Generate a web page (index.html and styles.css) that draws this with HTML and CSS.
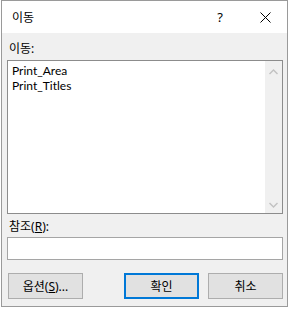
FILE: index.html
```html
<!DOCTYPE html>
<html lang="ko">
<head>
  <meta charset="UTF-8" />
  <title>이동</title>
  <link rel="stylesheet" href="styles.css">
</head>
<body>
  <div class="dialog">
    <!-- Title bar -->
    <div class="titlebar">
      <span class="title">이동</span>
      <span class="tb-btn help">?</span>
      <span class="tb-btn close">
        <svg width="11" height="11" viewBox="0 0 11 11"><path d="M0.5 0.5 L10.5 10.5 M10.5 0.5 L0.5 10.5" stroke="#000" stroke-width="1" fill="none"/></svg>
      </span>
    </div>

    <div class="body">
      <div class="label first">이동:</div>
      <div class="listbox">
        <ul class="items">
          <li>Print_Area</li>
          <li>Print_Titles</li>
        </ul>
        <div class="scrollbar">
          <svg width="9" height="6" viewBox="0 0 9 6"><path d="M0.5 5 L4.5 1 L8.5 5" stroke="#c2c2c2" stroke-width="1.4" fill="none"/></svg>
          <svg width="9" height="6" viewBox="0 0 9 6"><path d="M0.5 1 L4.5 5 L8.5 1" stroke="#c2c2c2" stroke-width="1.4" fill="none"/></svg>
        </div>
      </div>

      <div class="label">참조(<u>R</u>):</div>
      <div class="input"></div>

      <div class="buttons">
        <button class="btn">옵션(<u>S</u>)...</button>
        <span class="spacer"></span>
        <button class="btn default">확인</button>
        <button class="btn">취소</button>
      </div>
    </div>
  </div>
</body>
</html>
```

FILE: styles.css
```css
* {
  box-sizing: border-box;
  margin: 0;
  padding: 0;
}

body {
  background: #ffffff;
  font-family: "Noto Sans", "Noto Sans CJK KR", sans-serif;
  font-size: 12px;
  color: #000;
}

.dialog {
  margin-left: 1px;
  width: 287px;
  height: 307px;
  border: 1px solid #9a9a9a;
  background: #f0f0f0;
  display: flex;
  flex-direction: column;
}

.titlebar {
  height: 32px;
  background: #fff;
  display: flex;
  align-items: center;
  padding-left: 10px;
}

.title {
  flex: 1;
  font-size: 12px;
}

.tb-btn {
  height: 32px;
  display: flex;
  align-items: center;
  justify-content: center;
}

.help {
  width: 46px;
  font-size: 13px;
}

.close {
  width: 44px;
}

.body {
  flex: 1;
  padding: 0 4px 0 5px;
}

.label {
  line-height: 16px;
  padding-left: 2px;
  margin-top: 5px;
}

.label.first {
  margin-top: 8px;
  margin-bottom: 3px;
}

.listbox {
  height: 154px;
  border: 1px solid #8c8c8c;
  background: #fff;
  display: flex;
}

.items {
  flex: 1;
  list-style: none;
  padding: 2px 0 0 4px;
  font-family: Lato, "Noto Sans", sans-serif;
  font-size: 12px;
}

.items li {
  line-height: 15px;
}

.scrollbar {
  width: 17px;
  background: #f0f0f0;
  display: flex;
  flex-direction: column;
  justify-content: space-between;
  align-items: center;
  padding: 8px 0 5px;
}

.input {
  margin-top: 2px;
  height: 23px;
  border: 1px solid #a5a5a5;
  background: #fff;
}

.buttons {
  display: flex;
  margin-top: 13px;
  padding-left: 1px;
  gap: 9px;
}

.spacer {
  flex: 1;
}

.btn {
  width: 75px;
  height: 26px;
  border: 1px solid #adadad;
  background: #e1e1e1;
  font-family: inherit;
  font-size: 12px;
  color: #000;
}

.btn.default {
  border: 2px solid #0078d7;
}
```
